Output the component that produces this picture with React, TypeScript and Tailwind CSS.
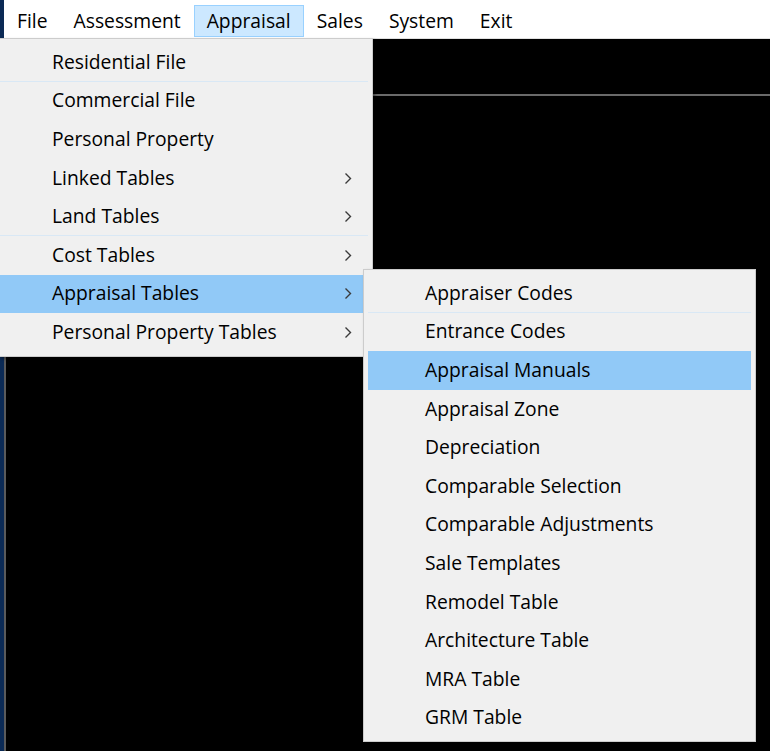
import React from "react";

const barItems = ["File", "Assessment", "Appraisal", "Sales", "System", "Exit"];

const appraisalItems = [
  { label: "Residential File", sep: true },
  { label: "Commercial File" },
  { label: "Personal Property" },
  { label: "Linked Tables", sub: true },
  { label: "Land Tables", sub: true, sep: true },
  { label: "Cost Tables", sub: true },
  { label: "Appraisal Tables", sub: true, active: true },
  { label: "Personal Property Tables", sub: true },
];

const tableItems = [
  { label: "Appraiser Codes", sep: true },
  { label: "Entrance Codes" },
  { label: "Appraisal Manuals", active: true },
  { label: "Appraisal Zone" },
  { label: "Depreciation" },
  { label: "Comparable Selection" },
  { label: "Comparable Adjustments" },
  { label: "Sale Templates" },
  { label: "Remodel Table" },
  { label: "Architecture Table" },
  { label: "MRA Table" },
  { label: "GRM Table" },
];

type Item = { label: string; sub?: boolean; sep?: boolean; active?: boolean };

function Chevron() {
  return (
    <svg width="8" height="13" viewBox="0 0 8 13" className="shrink-0">
      <path d="M1.5 1.5 L6.5 6.5 L1.5 11.5" fill="none" stroke="#3a3a3a" strokeWidth="1.4" />
    </svg>
  );
}

function MenuRow({ item, indent }: { item: Item; indent: string }) {
  return (
    <div
      className={`relative flex h-[38.6px] items-center pr-[16px] ${indent} ${
        item.active ? "bg-[#91c9f7]" : ""
      }`}
    >
      <span className="flex-1 whitespace-nowrap">{item.label}</span>
      {item.sub && <Chevron />}
      {item.sep && (
        <div className="absolute bottom-0 left-0 right-0 h-px bg-[#d9e8f5]" />
      )}
    </div>
  );
}

export default function App() {
  return (
    <div
      className="relative h-[751px] w-[770px] overflow-hidden bg-black text-[19.3px] text-black"
      style={{ fontFamily: '"Open Sans", "Noto Sans", sans-serif' }}
    >
      {/* menu bar */}
      <div className="flex h-[39px]">
        <div className="w-[4px] bg-[#0b2a55]" />
        <div className="flex flex-1 items-center border-b border-[#e0e0e0] bg-white pt-[4px]">
          {barItems.map((b) => (
            <div
              key={b}
              className={`flex h-[32px] items-center border px-[12px] pt-[1px] ${
                b === "Appraisal" ? "border-[#99d1ff] bg-[#cce8ff]" : "border-transparent"
              }`}
            >
              {b}
            </div>
          ))}
        </div>
      </div>

      {/* workspace behind the menus */}
      <div className="flex h-[712px]">
        <div className="w-[4px] bg-[#0b2a55]" />
        <div className="w-[2px] bg-[#5a5a5a]" />
        <div className="flex-1 pt-[55px]">
          <div className="h-[2px] bg-[#6a6a6a]" />
        </div>
      </div>

      {/* Appraisal dropdown */}
      <div className="absolute left-[-1px] top-[38px] w-[374px] border border-[#cccccc] bg-[#f0f0f0] py-[4px] pr-[4px] shadow-[2px_2px_3px_rgba(0,0,0,0.4)]">
        {appraisalItems.map((it) => (
          <MenuRow key={it.label} item={it} indent="pl-[52px]" />
        ))}
      </div>

      {/* Appraisal Tables submenu */}
      <div className="absolute left-[363px] top-[269px] w-[393px] border border-[#cccccc] bg-[#f0f0f0] px-[4px] py-[4px] shadow-[2px_2px_3px_rgba(0,0,0,0.4)]">
        {tableItems.map((it) => (
          <MenuRow key={it.label} item={it} indent="pl-[57px]" />
        ))}
      </div>
    </div>
  );
}
